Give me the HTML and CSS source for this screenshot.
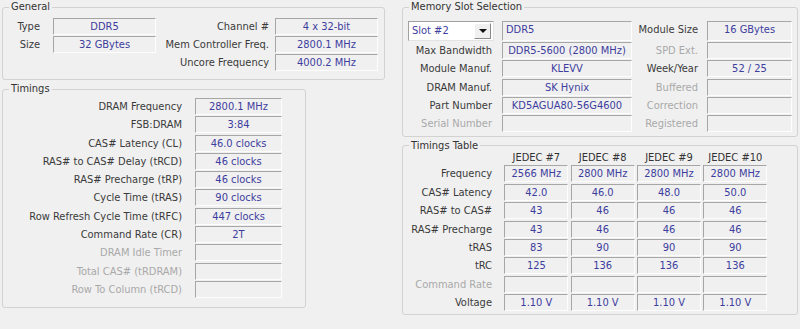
FILE: index.html
```html
<!DOCTYPE html>
<html>
<head>
<meta charset="utf-8">
<link rel="stylesheet" href="styles.css">
</head>
<body>
<div class="app">
  <div class="col col-left">
    <fieldset class="group general">
      <legend>General</legend>
      <div class="grid general-grid">
        <span class="lbl">Type</span><span class="fld">DDR5</span><span class="lbl">Channel #</span><span class="fld">4 x 32-bit</span>
        <span class="lbl">Size</span><span class="fld">32 GBytes</span><span class="lbl">Mem Controller Freq.</span><span class="fld">2800.1 MHz</span>
        <span></span><span></span><span class="lbl">Uncore Frequency</span><span class="fld">4000.2 MHz</span>
      </div>
    </fieldset>
    <fieldset class="group timings">
      <legend>Timings</legend>
      <div class="grid timings-grid">
        <span class="lbl">DRAM Frequency</span><span class="fld">2800.1 MHz</span>
        <span class="lbl">FSB:DRAM</span><span class="fld">3:84</span>
        <span class="lbl">CAS# Latency (CL)</span><span class="fld">46.0 clocks</span>
        <span class="lbl">RAS# to CAS# Delay (tRCD)</span><span class="fld">46 clocks</span>
        <span class="lbl">RAS# Precharge (tRP)</span><span class="fld">46 clocks</span>
        <span class="lbl">Cycle Time (tRAS)</span><span class="fld">90 clocks</span>
        <span class="lbl">Row Refresh Cycle Time (tRFC)</span><span class="fld">447 clocks</span>
        <span class="lbl">Command Rate (CR)</span><span class="fld">2T</span>
        <span class="lbl dis">DRAM Idle Timer</span><span class="fld"></span>
        <span class="lbl dis">Total CAS# (tRDRAM)</span><span class="fld"></span>
        <span class="lbl dis">Row To Column (tRCD)</span><span class="fld"></span>
      </div>
    </fieldset>
  </div>
  <div class="col col-right">
    <fieldset class="group slot">
      <legend>Memory Slot Selection</legend>
      <div class="grid slot-grid">
        <div class="combo"><span class="combo-text">Slot #2</span><span class="combo-btn"><span class="tri"></span></span></div>
        <span class="fld left">DDR5</span><span class="lbl">Module Size</span><span class="fld">16 GBytes</span>
        <span class="lbl">Max Bandwidth</span><span class="fld">DDR5-5600 (2800 MHz)</span><span class="lbl dis">SPD Ext.</span><span class="fld"></span>
        <span class="lbl">Module Manuf.</span><span class="fld">KLEVV</span><span class="lbl">Week/Year</span><span class="fld">52 / 25</span>
        <span class="lbl">DRAM Manuf.</span><span class="fld">SK Hynix</span><span class="lbl dis">Buffered</span><span class="fld"></span>
        <span class="lbl">Part Number</span><span class="fld">KD5AGUA80-56G4600</span><span class="lbl dis">Correction</span><span class="fld"></span>
        <span class="lbl dis">Serial Number</span><span class="fld"></span><span class="lbl dis">Registered</span><span class="fld"></span>
      </div>
    </fieldset>
    <fieldset class="group table">
      <legend>Timings Table</legend>
      <div class="grid table-grid">
        <span></span><span class="hdr">JEDEC #7</span><span class="hdr">JEDEC #8</span><span class="hdr">JEDEC #9</span><span class="hdr">JEDEC #10</span>
        <span class="lbl">Frequency</span><span class="fld">2566 MHz</span><span class="fld">2800 MHz</span><span class="fld">2800 MHz</span><span class="fld">2800 MHz</span>
        <span class="lbl">CAS# Latency</span><span class="fld">42.0</span><span class="fld">46.0</span><span class="fld">48.0</span><span class="fld">50.0</span>
        <span class="lbl">RAS# to CAS#</span><span class="fld">43</span><span class="fld">46</span><span class="fld">46</span><span class="fld">46</span>
        <span class="lbl">RAS# Precharge</span><span class="fld">43</span><span class="fld">46</span><span class="fld">46</span><span class="fld">46</span>
        <span class="lbl">tRAS</span><span class="fld">83</span><span class="fld">90</span><span class="fld">90</span><span class="fld">90</span>
        <span class="lbl">tRC</span><span class="fld">125</span><span class="fld">136</span><span class="fld">136</span><span class="fld">136</span>
        <span class="lbl dis">Command Rate</span><span class="fld"></span><span class="fld"></span><span class="fld"></span><span class="fld"></span>
        <span class="lbl">Voltage</span><span class="fld">1.10 V</span><span class="fld">1.10 V</span><span class="fld">1.10 V</span><span class="fld">1.10 V</span>
      </div>
    </fieldset>
  </div>
</div>
</body>
</html>
```

FILE: styles.css
```css
* { box-sizing: border-box; }
html, body { margin: 0; padding: 0; }
body {
  width: 800px;
  height: 329px;
  overflow: hidden;
  background: #f0f0f0;
  font-family: "DejaVu Sans Condensed", "DejaVu Sans", sans-serif;
  font-size: 11px;
  color: #3a3a3a;
}
.app { display: flex; gap: 17px; padding-left: 2px; }
.col { display: flex; flex-direction: column; gap: 2px; }
.col-left { width: 383px; }
.col-right { width: 396px; }

.group {
  margin: 0;
  padding: 0;
  min-width: 0;
  border: 1px solid #d2d2d2;
  border-radius: 3px;
}
.group legend {
  margin-left: 6px;
  padding: 0 2px;
  line-height: 14px;
  height: 14px;
  color: #333;
}
.general { width: 383px; padding: 4px 0 8px; }
.timings { width: 304px; padding: 2px 0 9px; }
.slot { width: 396px; padding: 7px 0 4px; }
.table { width: 396px; padding: 0 0 3px; }

.grid { display: grid; }
.general-grid {
  grid-template-columns: 50px 103px 119px 103px;
  grid-auto-rows: 17px;
  row-gap: 1px;
}
.general-grid .lbl:nth-child(4n+1) { padding-right: 13px; }
.general-grid .lbl:nth-child(4n+3) { padding-right: 6px; }

.timings-grid {
  grid-template-columns: 192px 87px;
  grid-auto-rows: 17px;
  row-gap: 1.3px;
}
.timings-grid .lbl { padding-right: 13px; }

.slot-grid {
  grid-template-columns: 99px 130px 75px 85px;
  grid-template-rows: 20px;
  grid-auto-rows: 17px;
  row-gap: 1.2px;
}
.slot-grid .lbl:nth-child(4n+1) { padding-right: 10px; }
.slot-grid .lbl:nth-child(4n+3) { padding-right: 9px; }

.table-grid {
  grid-template-columns: 99px repeat(4, 64px);
  grid-template-rows: 11px;
  grid-auto-rows: 17px;
  column-gap: 2.33px;
  row-gap: 1.43px;
}
.table-grid .lbl { padding-right: 10px; }

.lbl {
  text-align: right;
  line-height: 17px;
  white-space: nowrap;
}
.dis { color: #a9a9a9; }

.fld {
  border-top: 1px solid #a6a6a6;
  border-left: 1px solid #a6a6a6;
  border-right: 1px solid #fdfdfd;
  border-bottom: 1px solid #fdfdfd;
  line-height: 15px;
  text-align: center;
  color: #3d3d9e;
  white-space: nowrap;
  overflow: hidden;
}
.fld.left { text-align: left; padding-left: 3px; }

.hdr {
  text-align: center;
  line-height: 9px;
  color: #333;
  white-space: nowrap;
}

.combo {
  margin-left: 5px;
  width: 86px;
  height: 20px;
  display: flex;
  align-items: center;
  background: #fff;
  border: 1px solid #a0a0a0;
  border-right-color: #e3e3e3;
  border-bottom-color: #e3e3e3;
  padding: 1px 2px 1px 2px;
}
.combo-text { flex: 1; color: #3d3d9e; padding-left: 1px; line-height: 16px; }
.combo-btn {
  width: 17px;
  height: 16px;
  display: flex;
  align-items: center;
  justify-content: center;
  background: #f0f0f0;
  border: 1px solid #fff;
  border-right-color: #8a8a8a;
  border-bottom-color: #8a8a8a;
}
.tri {
  width: 0;
  height: 0;
  border-left: 4px solid transparent;
  border-right: 4px solid transparent;
  border-top: 4px solid #111;
}
```
